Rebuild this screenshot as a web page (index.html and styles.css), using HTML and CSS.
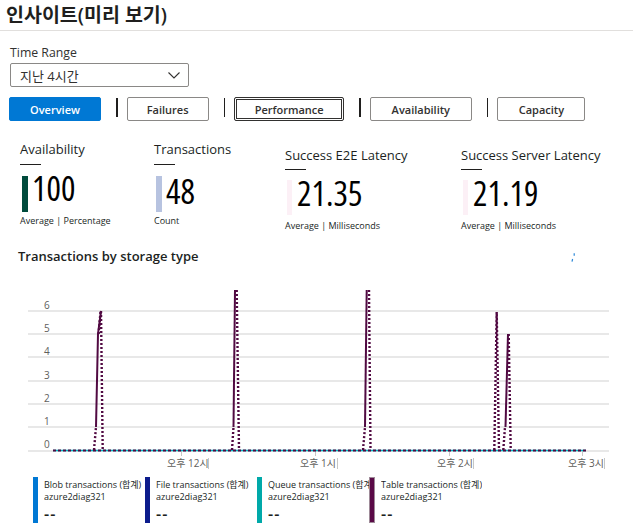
FILE: index.html
```html
<!DOCTYPE html>
<html lang="ko">
<head>
<meta charset="utf-8">
<title>인사이트(미리 보기)</title>
<link rel="stylesheet" href="styles.css">
</head>
<body>
<header class="header">
  <h1 class="title">인사이트(미리 보기)</h1>
</header>

<section class="filters">
  <div class="field-label">Time Range</div>
  <div class="dropdown">
    <span>지난 4시간</span>
    <svg class="chevron" width="12" height="7" viewBox="0 0 12 7"><polyline points="0.5,0.5 6,6 11.5,0.5" fill="none" stroke="#323130" stroke-width="1.1"/></svg>
  </div>
  <div class="tabs">
    <button class="tab tab--primary tab--overview">Overview</button>
    <span class="sep"></span>
    <button class="tab tab--failures">Failures</button>
    <span class="sep"></span>
    <button class="tab tab--focus tab--performance">Performance</button>
    <span class="sep"></span>
    <button class="tab tab--availability">Availability</button>
    <span class="sep"></span>
    <button class="tab tab--capacity">Capacity</button>
  </div>
</section>

<section class="metrics">
  <div class="metric">
    <div class="metric-title">Availability</div>
    <div class="metric-rule"></div>
    <div class="metric-value">
      <span class="metric-bar bar-green"></span>
      <span class="metric-number num-a">100</span>
    </div>
    <div class="metric-sub">Average | Percentage</div>
  </div>
  <div class="metric">
    <div class="metric-title">Transactions</div>
    <div class="metric-rule"></div>
    <div class="metric-value">
      <span class="metric-bar bar-blue"></span>
      <span class="metric-number num-b">48</span>
    </div>
    <div class="metric-sub">Count</div>
  </div>
  <div class="metric metric--lat">
    <div class="metric-title">Success E2E Latency</div>
    <div class="metric-rule"></div>
    <div class="metric-value">
      <span class="metric-bar bar-pink"></span>
      <span class="metric-number num-c">21.35</span>
    </div>
    <div class="metric-sub">Average | Milliseconds</div>
  </div>
  <div class="metric metric--lat">
    <div class="metric-title">Success Server Latency</div>
    <div class="metric-rule"></div>
    <div class="metric-value">
      <span class="metric-bar bar-pink"></span>
      <span class="metric-number num-c">21.19</span>
    </div>
    <div class="metric-sub">Average | Milliseconds</div>
  </div>
</section>

<div class="chart-head">
  <h2 class="chart-title">Transactions by storage type</h2>
  <svg class="mini-icon" width="4" height="9" viewBox="0 0 4 9"><path d="M3.2 0.3 V2.8 M1.6 6 L1 8.7" stroke="#2b88d8" stroke-width="1.2" fill="none"/></svg>
</div>

<svg class="chart" width="633" height="207" viewBox="0 265 633 207">
  <g stroke="#e1e1e1" stroke-width="1.6">
    <line x1="28" y1="311" x2="609" y2="311"/>
    <line x1="28" y1="334" x2="609" y2="334"/>
    <line x1="28" y1="357" x2="609" y2="357"/>
    <line x1="28" y1="381" x2="609" y2="381"/>
    <line x1="28" y1="404" x2="609" y2="404"/>
    <line x1="28" y1="427" x2="609" y2="427"/>
    <line x1="28" y1="451" x2="609" y2="451"/>
  </g>
  <g class="axis-text" font-size="10" fill="#605e5c">
    <text x="44" y="309">6</text>
    <text x="44" y="332">5</text>
    <text x="44" y="355">4</text>
    <text x="44" y="379">3</text>
    <text x="44" y="402">2</text>
    <text x="44" y="425">1</text>
    <text x="44" y="448">0</text>
  </g>
  <g stroke="#c8c6c4" stroke-width="1">
    <line x1="181.5" y1="451" x2="181.5" y2="456"/>
    <line x1="315.5" y1="451" x2="315.5" y2="456"/>
    <line x1="449.5" y1="451" x2="449.5" y2="456"/>
    <line x1="582.5" y1="451" x2="582.5" y2="456"/>
    <line x1="208.5" y1="458" x2="208.5" y2="469"/>
    <line x1="337.5" y1="458" x2="337.5" y2="469"/>
    <line x1="473.5" y1="458" x2="473.5" y2="469"/>
    <line x1="604.5" y1="458" x2="604.5" y2="469"/>
  </g>
  <g class="axis-text" font-size="10" fill="#605e5c">
    <text x="167" y="467">오후 12시</text>
    <text x="300" y="467">오후 1시</text>
    <text x="437" y="467">오후 2시</text>
    <text x="568" y="467">오후 3시</text>
  </g>
  <line x1="53" y1="450.5" x2="586" y2="450.5" stroke="#00b7c3" stroke-width="1.6"/>
  <line x1="53" y1="450.5" x2="586" y2="450.5" stroke="#510a42" stroke-width="1.8" stroke-dasharray="3 2"/>
  <g fill="none" stroke="#510a42" stroke-width="2">
    <polyline points="96,427 98,334 101,311"/>
    <polyline points="233.5,427 235,290"/>
    <polyline points="365,427 366.7,290"/>
    <polyline points="505.5,427 508,334"/>
  </g>
  <g fill="none" stroke="#510a42" stroke-width="2.4" stroke-dasharray="2 2">
    <polyline points="94,450 96,427"/>
    <polyline points="101,311 102.7,450"/>
    <polyline points="98.6,334 100.5,312"/>
    <polyline points="232,450 233.5,427"/>
    <polyline points="236.7,290 239,450"/>
    <polyline points="363,450 365,427"/>
    <polyline points="369,290 370.5,450"/>
    <polyline points="494.3,450 496.7,312 499,450"/>
    <polyline points="503.3,450 505,427"/>
    <polyline points="508.7,334 510.7,450"/>
  </g>
</svg>

<section class="legend">
  <div class="legend-item">
    <span class="legend-bar lb-blob"></span>
    <div class="legend-text">
      <div class="legend-name">Blob transactions (합계)</div>
      <div class="legend-res">azure2diag321</div>
      <div class="legend-value">--</div>
    </div>
  </div>
  <div class="legend-item">
    <span class="legend-bar lb-file"></span>
    <div class="legend-text">
      <div class="legend-name">File transactions (합계)</div>
      <div class="legend-res">azure2diag321</div>
      <div class="legend-value">--</div>
    </div>
  </div>
  <div class="legend-item">
    <span class="legend-bar lb-queue"></span>
    <div class="legend-text">
      <div class="legend-name">Queue transactions (합계)</div>
      <div class="legend-res">azure2diag321</div>
      <div class="legend-value">--</div>
    </div>
  </div>
  <div class="legend-item legend-item--last">
    <span class="legend-bar lb-table"></span>
    <div class="legend-text">
      <div class="legend-name">Table transactions (합계)</div>
      <div class="legend-res">azure2diag321</div>
      <div class="legend-value">--</div>
    </div>
  </div>
</section>
</body>
</html>
```

FILE: styles.css
```css
* { box-sizing: border-box; }

body {
  margin: 0;
  width: 633px;
  background: #ffffff;
  color: #323130;
  font-family: "Open Sans", "Noto Sans CJK KR", sans-serif;
}

.header {
  height: 31px;
  border-bottom: 1px solid #e1dfdd;
  padding-left: 6px;
  display: flex;
  align-items: center;
}

.title {
  margin: 0;
  font-size: 19.5px;
  font-weight: 600;
  line-height: 30px;
  color: #201f1e;
}

.filters {
  padding: 13px 0 0 10px;
}

.field-label {
  font-size: 12.3px;
  line-height: 17px;
}

.dropdown {
  margin-top: 2px;
  width: 179px;
  height: 24px;
  border: 1px solid #8a8886;
  border-radius: 2px;
  display: flex;
  align-items: center;
  justify-content: space-between;
  padding: 0 8px 0 9px;
  font-size: 13px;
  color: #323130;
}

.tabs {
  margin-top: 10px;
  margin-left: -1px;
  display: flex;
  align-items: flex-start;
}

.tab {
  height: 24px;
  padding: 0;
  border: 1px solid #8a8886;
  border-radius: 2px;
  background: #ffffff;
  color: #323130;
  font-family: "Open Sans", sans-serif;
  font-size: 11px;
  font-weight: 600;
}

.tab--primary {
  background: #0078d4;
  border-color: #0078d4;
  color: #ffffff;
}

.tab--focus {
  border-color: #323130;
  box-shadow: inset 0 0 0 1px #ffffff, inset 0 0 0 2px #323130;
}

.tab--overview { width: 92px; }
.tab--failures { width: 82px; }
.tab--performance { width: 110px; }
.tab--availability { width: 102px; }
.tab--capacity { width: 88px; }

.sep {
  width: 1.6px;
  height: 19px;
  margin: 1px 9px 0 15px;
  background: #201f1e;
}

.metrics {
  display: grid;
  grid-template-columns: 134px 131px 176px 1fr;
  padding: 19px 0 0 20px;
}

.metric-title {
  font-size: 13px;
  line-height: 18px;
  white-space: nowrap;
  color: #201f1e;
}

.metric-rule {
  width: 21px;
  height: 1px;
  margin-top: 6px;
  background: #201f1e;
}

.metric-value {
  display: flex;
  align-items: flex-start;
  margin-top: 11px;
  height: 36px;
}

.metric-bar {
  width: 6px;
  height: 36px;
  margin-left: 2px;
  flex-shrink: 0;
}

.bar-green { background: #004b3c; }
.bar-blue { background: #b7c3e0; }
.bar-pink { background: #fcf0f6; width: 5px; height: 35px; }

.metric-number {
  margin-left: 4px;
  font-family: "Open Sans", sans-serif;
  font-stretch: 75%;
  font-size: 34px;
  color: #000000;
  white-space: nowrap;
}

.num-a { line-height: 24px; }
.num-b { line-height: 30px; }
.num-c { line-height: 26px; margin-left: 5px; }

.metric-sub {
  margin-top: 3px;
  font-size: 9px;
  line-height: 12px;
  white-space: nowrap;
  color: #201f1e;
}

.metric--lat { padding-top: 6px; }
.metric--lat .metric-rule { margin-top: 5px; }
.metric--lat .metric-value { margin-top: 10px; height: 35px; }
.metric--lat .metric-sub { margin-top: 5px; }

.chart-head {
  margin-top: 15px;
  padding: 0 58px 0 18px;
  display: flex;
  justify-content: space-between;
  align-items: center;
}

.chart-title {
  margin: 0;
  font-size: 13px;
  font-weight: 600;
  line-height: 18px;
  color: #201f1e;
}

.mini-icon {
  display: block;
  margin-top: 3px;
}

.chart {
  display: block;
}

.axis-text {
  font-family: "Open Sans", "Noto Sans CJK KR", sans-serif;
}

.legend {
  margin-top: 5px;
  padding-left: 33px;
  display: flex;
}

.legend-item {
  width: 112px;
  height: 46px;
  display: flex;
}

.legend-item--last {
  width: auto;
}

.legend-bar {
  width: 5px;
  height: 46px;
  flex-shrink: 0;
}

.lb-blob { background: #0078d4; }
.lb-file { background: #0c1c8c; }
.lb-queue { background: #00a9a9; }
.lb-table { background: #5a0a47; width: 6px; border: 1px solid #9e8a98; }

.legend-text {
  flex: 1;
  min-width: 0;
  margin-left: 6px;
  padding-top: 2px;
  white-space: nowrap;
  font-size: 9px;
  line-height: 12px;
  color: #201f1e;
}

.legend-name,
.legend-res {
  overflow: hidden;
}

.legend-value {
  margin-top: 2px;
  font-size: 16px;
  font-weight: 600;
  line-height: 18px;
  letter-spacing: 1px;
}
```
